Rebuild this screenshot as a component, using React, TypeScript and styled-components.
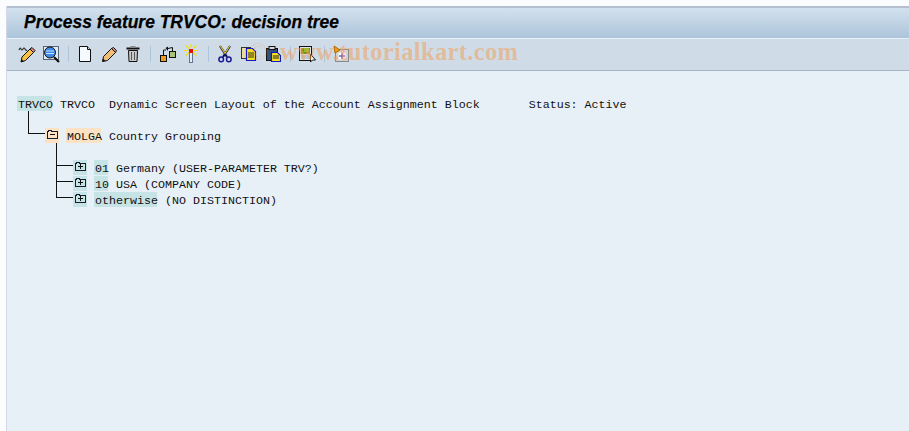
import React from "react";
import styled, { createGlobalStyle } from "styled-components";

const GlobalStyle = createGlobalStyle`
  html, body { margin: 0; padding: 0; background: #fdfdfe; }
  #root { width: 909px; height: 431px; overflow: hidden; }
`;

const Page = styled.div`
  position: relative;
  box-sizing: border-box;
  width: 909px;
  height: 431px;
  padding: 6px 0 0 6px;
  background: #fbfcfd;
  overflow: hidden;
`;

const Window = styled.div`
  display: flex;
  flex-direction: column;
  height: 425px;
  border-left: 1px solid #d3d9e4;
  background: #e8f0f7;
`;

const TitleBar = styled.div`
  display: flex;
  align-items: center;
  box-sizing: border-box;
  height: 33px;
  padding: 0 0 1px 17px;
  border-top: 2px solid #b5bfd0;
  border-bottom: 1px solid #e9f0f6;
  background: linear-gradient(#d3e1ee, #acc4da);
`;

const Title = styled.h1`
  margin: 0;
  font: italic bold 17.45px "Liberation Sans", Arial, sans-serif;
  color: #000;
  -webkit-text-stroke: 0.25px #000;
`;

const Toolbar = styled.div`
  display: flex;
  align-items: center;
  box-sizing: border-box;
  height: 32px;
  padding: 0 0 2px 8px;
  border-bottom: 1px solid #a9b4c3;
  background: #cfdce8;
`;

const ToolButton = styled.span`
  display: flex;
  align-items: center;
  justify-content: center;
  width: 24px;
  height: 20px;
`;

const Separator = styled.span`
  width: 1px;
  height: 16px;
  margin: 0 4px 0 5px;
  background: #aec4da;
`;

const Content = styled.div`
  position: relative;
  flex: 1;
  padding-top: 25px;
  font: 11.67px/18px "Liberation Mono", "Courier New", monospace;
  color: #111;
`;

const Row = styled.div<{ $indent: number }>`
  display: flex;
  align-items: flex-start;
  height: 16px;
  padding-left: ${(p) => p.$indent}px;
  white-space: pre;
`;

const Spacer = styled.div`
  height: 16px;
`;

const Mark = styled.span<{ $tone: "teal" | "orange"; $chars: number }>`
  display: block;
  width: ${(p) => p.$chars * 7}px;
  height: 15px;
  margin-right: 1px;
  text-indent: 1px;
  background: ${(p) => (p.$tone === "teal" ? "#c6e3e6" : "#fbe2c4")};
`;

const NodeIcon = styled.span<{ $tone: "teal" | "orange" }>`
  display: flex;
  justify-content: center;
  box-sizing: border-box;
  width: 14px;
  height: 15px;
  margin-right: 7px;
  padding-top: 2px;
  background: ${(p) => (p.$tone === "teal" ? "#c6e3e6" : "#fbe2c4")};
`;

const TreeLines = styled.svg`
  position: absolute;
  left: -7px;
  top: -71px;
  pointer-events: none;
`;

const Watermark = styled.div`
  position: absolute;
  left: 249px;
  top: 38px;
  display: flex;
  align-items: center;
  font: bold 24.5px "Liberation Serif", "Times New Roman", serif;
  letter-spacing: 0.35px;
  color: rgba(240, 160, 90, 0.55);
  white-space: pre;
  pointer-events: none;
`;

const Copyright = styled.span`
  font-weight: normal;
  margin-right: 12px;
  opacity: 0.45;
`;

const Svg: React.FC<{ children: React.ReactNode; w?: number; h?: number }> = ({ children, w = 18, h = 18 }) => (
  <svg width={w} height={h} viewBox={`0 0 ${w} ${h}`}>
    {children}
  </svg>
);

const Glasses = () => (
  <Svg>
    <path d="M1 5 q1-3 2-1 t2 0 q1-2 2 0 t2 1" fill="none" stroke="#333" strokeWidth="1.2" />
    <path d="M3 17 l1-5 8-8 3.500 3.500 -8 8 z" fill="#f7c040" stroke="#111" />
    <path d="M12 4 l3.500 3.500 1.500-2 -3-3 z" fill="#e88a8a" stroke="#111" />
    <path d="M3 17 l.6-3 2.400 2.400 z" fill="#111" />
  </Svg>
);

const Inspect = () => (
  <Svg>
    <rect x="1.500" y="1.500" width="15" height="13" fill="#e4eaf0" stroke="#55657a" />
    <circle cx="8" cy="7.500" r="5.500" fill="#3f8be8" stroke="#111" />
    <path d="M4 6h8M4 8.500h8" stroke="#bfe0ff" strokeWidth="1" />
    <path d="M12 12 l5 5" stroke="#111" strokeWidth="2.200" />
  </Svg>
);

const NewDoc = () => (
  <Svg w={14}>
    <path d="M1.500 1.500 h8 l3 3 v12 h-11 z" fill="#f4faff" stroke="#111" />
    <path d="M9.500 1.500 v3 h3" fill="#c8d8e8" stroke="#111" />
  </Svg>
);

const Pencil = () => (
  <Svg w={16}>
    <path d="M1.500 16.500 l1-5 8-8 4 4 -8 8 z" fill="#f2bd76" stroke="#111" />
    <path d="M10.500 3.500 l4 4 1-2 -3-3 z" fill="#e58a8a" stroke="#111" />
    <path d="M1.500 16.500 l.6-3 2.400 2.400 z" fill="#111" />
  </Svg>
);

const Trash = () => (
  <Svg w={14}>
    <path d="M.5 3.500 h13" stroke="#111" strokeWidth="2" />
    <rect x="4.500" y="1" width="5" height="2" fill="#888" />
    <path d="M2.500 5.500 h9 l-.5 11 h-8 z" fill="#c9c9c9" stroke="#111" />
    <path d="M5.500 7 v8 M8.500 7 v8" stroke="#555" />
  </Svg>
);

const Move = () => (
  <Svg w={17}>
    <rect x="1.500" y="10.500" width="6" height="6" fill="#f09a1e" stroke="#111" />
    <rect x="10.500" y="6.500" width="6" height="6" fill="#a9c27a" stroke="#111" />
    <path d="M4.500 10 V5 H7 M9 3.500 L13.500 2.500 V6" fill="none" stroke="#111" />
    <path d="M6.500 3 l2.500-1.500 v4.500 z" fill="#111" />
  </Svg>
);

const Wand = () => (
  <svg width="14" height="19" viewBox="0 0 14 19">
    <rect x="5.500" y="8.500" width="3" height="10" fill="#e6ecf2" stroke="#64748a" />
    <rect x="5" y="5" width="4" height="4" fill="#e01010" />
    <path d="M7 0v3.500M0 6.500h4M10 6.500h4M1.500 1.500l3.500 3M12.500 1.500l-3.500 3M1.500 11.500l3.500-3M12.500 11.500l-3.500-3" stroke="#f2e000" strokeWidth="1.200" />
  </svg>
);

const Scissors = () => (
  <Svg w={14}>
    <path d="M2 1 L9 12 M12 1 L5 12" stroke="#14145a" strokeWidth="2.200" />
    <path d="M2.300 1 L7 8.500 M11.700 1 L7 8.500" stroke="#ecd020" strokeWidth="1.100" />
    <circle cx="3.200" cy="14.400" r="2.300" fill="none" stroke="#1a1a90" strokeWidth="1.500" />
    <circle cx="10.800" cy="14.400" r="2.300" fill="none" stroke="#1a1a90" strokeWidth="1.500" />
  </Svg>
);

const Copy = () => (
  <Svg w={16}>
    <rect x=".5" y="2.500" width="9" height="11" fill="#e9dca0" stroke="#333" />
    <path d="M5.500 3.500 h6 l3 3 v9 h-9 z" fill="#f7e11e" stroke="#1414c8" strokeWidth="1.200" />
    <path d="M7 8h6M7 10h6M7 12h6" stroke="#222" />
  </Svg>
);

const Paste = () => (
  <Svg w={16}>
    <rect x="1.500" y="3.500" width="11" height="12" fill="#33507a" stroke="#111" />
    <rect x="4" y="1.500" width="6" height="3" fill="#d8d8d8" stroke="#111" />
    <path d="M6.500 7.500 h6 l3 3 v6 h-9 z" fill="#f7e11e" stroke="#1414c8" strokeWidth="1.200" />
    <path d="M8 11h6M8 13h6" stroke="#222" />
  </Svg>
);

const Screen = () => (
  <Svg w={19}>
    <rect x="1.500" y="1.500" width="12" height="14" fill="#dfe7ee" stroke="#111" />
    <rect x="3" y="3" width="9" height="6" fill="#6d8f10" />
    <path d="M6 3 h5 v4 h-5z" fill="#9ab82a" />
    <path d="M3 11h9M3 13h9" stroke="#8fb0c8" />
    <path d="M12.500 9 v8 l2-2 h3 z" fill="#fff" stroke="#111" />
  </Svg>
);

const Plus = () => (
  <Svg w={17}>
    <rect x="2.500" y="4.500" width="13" height="12" fill="#d9d2c7" stroke="#8a8a8a" />
    <rect x="5" y="7" width="8" height="8" fill="#fff" stroke="#c9c9d9" />
    <path d="M9 8v6M6 11h6" stroke="#1a1ad0" />
    <path d="M1 1 l6 4 -5 3 z" fill="#f59b10" stroke="#b06800" />
  </Svg>
);

const Folder: React.FC<{ open?: boolean }> = ({ open }) => (
  <svg width="11" height="9" viewBox="0 0 11 9" shapeRendering="crispEdges">
    <path d="M.5 8.500 V1.500 H1.500 V.5 H4.500 V1.500 H10.500 V8.500 Z" fill="none" stroke="#1a1a33" />
    <path d="M3 4.500 H8" stroke="#111" />
    {!open && <path d="M5.500 2 V7" stroke="#111" />}
  </svg>
);

const tools = [
  [<Glasses key="a" />, <Inspect key="b" />],
  [<NewDoc key="c" />, <Pencil key="d" />, <Trash key="e" />],
  [<Move key="f" />, <Wand key="g" />],
  [<Scissors key="h" />, <Copy key="i" />, <Paste key="j" />],
  [<Screen key="k" />],
  [<Plus key="l" />],
];

export default function App() {
  return (
    <Page>
      <GlobalStyle />
      <Window>
        <TitleBar>
          <Title>Process feature TRVCO: decision tree</Title>
        </TitleBar>
        <Toolbar>
          {tools.map((group, i) => (
            <React.Fragment key={i}>
              {i > 0 && <Separator />}
              {group.map((icon, j) => (
                <ToolButton key={j}>{icon}</ToolButton>
              ))}
            </React.Fragment>
          ))}
        </Toolbar>
        <Content>
          <TreeLines width="120" height="220" viewBox="0 0 120 220" shapeRendering="crispEdges">
            <g fill="none" stroke="#111">
              <path d="M28.500 111 V133.500 H45" />
              <path d="M56.500 143 V197.500 H73 M56.500 165.500 H73 M56.500 181.500 H73" />
            </g>
          </TreeLines>
          <Row $indent={10}>
            <Mark $tone="teal" $chars={5}>TRVCO</Mark>
            {" TRVCO  Dynamic Screen Layout of the Account Assignment Block       Status: Active"}
          </Row>
          <Spacer />
          <Row $indent={38}>
            <NodeIcon $tone="orange"><Folder open /></NodeIcon>
            <Mark $tone="orange" $chars={5}>MOLGA</Mark>
            {" Country Grouping"}
          </Row>
          <Spacer />
          <Row $indent={66}>
            <NodeIcon $tone="teal"><Folder /></NodeIcon>
            <Mark $tone="teal" $chars={2}>01</Mark>
            {" Germany (USER-PARAMETER TRV?)"}
          </Row>
          <Row $indent={66}>
            <NodeIcon $tone="teal"><Folder /></NodeIcon>
            <Mark $tone="teal" $chars={2}>10</Mark>
            {" USA (COMPANY CODE)"}
          </Row>
          <Row $indent={66}>
            <NodeIcon $tone="teal"><Folder /></NodeIcon>
            <Mark $tone="teal" $chars={9}>otherwise</Mark>
            {" (NO DISTINCTION)"}
          </Row>
        </Content>
      </Window>
      <Watermark><Copyright>©</Copyright>www.tutorialkart.com</Watermark>
    </Page>
  );
}
